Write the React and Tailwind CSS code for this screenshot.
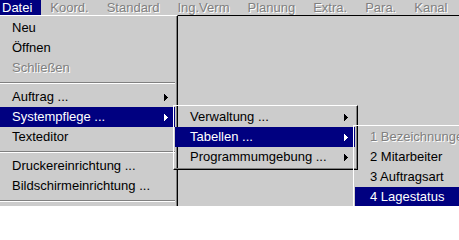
import React from 'react';

const barItems = ['Koord.', 'Standard', 'Ing.Verm', 'Planung', 'Extra.', 'Para.', 'Kanal', 'O'];

const Arrow = ({ white }) => (
  <svg width="4" height="7" shapeRendering="crispEdges" className="shrink-0">
    <g fill={white ? '#ffffff' : '#000000'}>
      <rect x="0" y="0" width="1" height="7" />
      <rect x="1" y="1" width="1" height="5" />
      <rect x="2" y="2" width="1" height="3" />
      <rect x="3" y="3" width="1" height="1" />
    </g>
  </svg>
);

const Separator = () => (
  <div className="h-[9px] pt-[4px]">
    <div className="h-px bg-[#808080]" />
    <div className="h-px bg-white" />
  </div>
);

const Item = ({ label, sub, active, disabled }) => (
  <div
    className={`flex items-center justify-between h-[20px] pl-[15px] pr-[7px] whitespace-nowrap ${
      active ? 'bg-[#000080] text-white' : disabled ? 'text-[#808080] [text-shadow:1px_1px_0_#ffffff]' : 'text-black'
    }`}
  >
    <span>{label}</span>
    {sub && <Arrow white={active} />}
  </div>
);

const Menu = ({ className, width, topPad, items }) => (
  <div className={`absolute border border-t-white border-l-white border-r-black border-b-black ${className}`}>
    <div className={`border-r border-b border-[#808080] px-px pb-px ${topPad}`}>
      <div className={width}>
        {items.map((it, i) =>
          it === '-' ? <Separator key={i} /> : <Item key={i} {...it} />
        )}
      </div>
    </div>
  </div>
);

const mainItems = [
  { label: 'Neu' },
  { label: 'Öffnen' },
  { label: 'Schließen', disabled: true },
  '-',
  { label: 'Auftrag ...', sub: true },
  { label: 'Systempflege ...', sub: true, active: true },
  { label: 'Texteditor' },
  '-',
  { label: 'Druckereinrichtung ...' },
  { label: 'Bildschirmeinrichtung ...' },
  '-',
];

const systemItems = [
  { label: 'Verwaltung ...', sub: true },
  { label: 'Tabellen ...', sub: true, active: true },
  { label: 'Programmumgebung ...', sub: true },
];

const tableItems = [
  { label: '1 Bezeichnungen', disabled: true },
  { label: '2 Mitarbeiter' },
  { label: '3 Auftragsart' },
  { label: '4 Lagestatus', active: true },
];

export default function App() {
  return (
    <div className="relative flex flex-col w-[459px] h-[206px] overflow-hidden bg-[#cccccc] font-['Liberation_Sans',Arial,sans-serif] text-[13px]">
      <div className="flex h-[15px] leading-[15px] ml-[-7px] whitespace-nowrap shrink-0">
        <div className="px-[9px] bg-[#000080] text-white">Datei</div>
        {barItems.map((name) => (
          <div key={name} className="px-[9px] text-[#808080] [text-shadow:1px_1px_0_#ffffff]">
            {name}
          </div>
        ))}
      </div>
      <div className="flex-1 border-t border-black" />

      <Menu className="left-[-5px] top-[15px]" width="w-[178px]" topPad="pt-[2px]" items={mainItems} />
      <Menu className="left-[173px] top-[105px]" width="w-[180px]" topPad="pt-px" items={systemItems} />
      <Menu className="left-[353px] top-[125px]" width="w-[160px]" topPad="pt-px" items={tableItems} />
    </div>
  );
}
